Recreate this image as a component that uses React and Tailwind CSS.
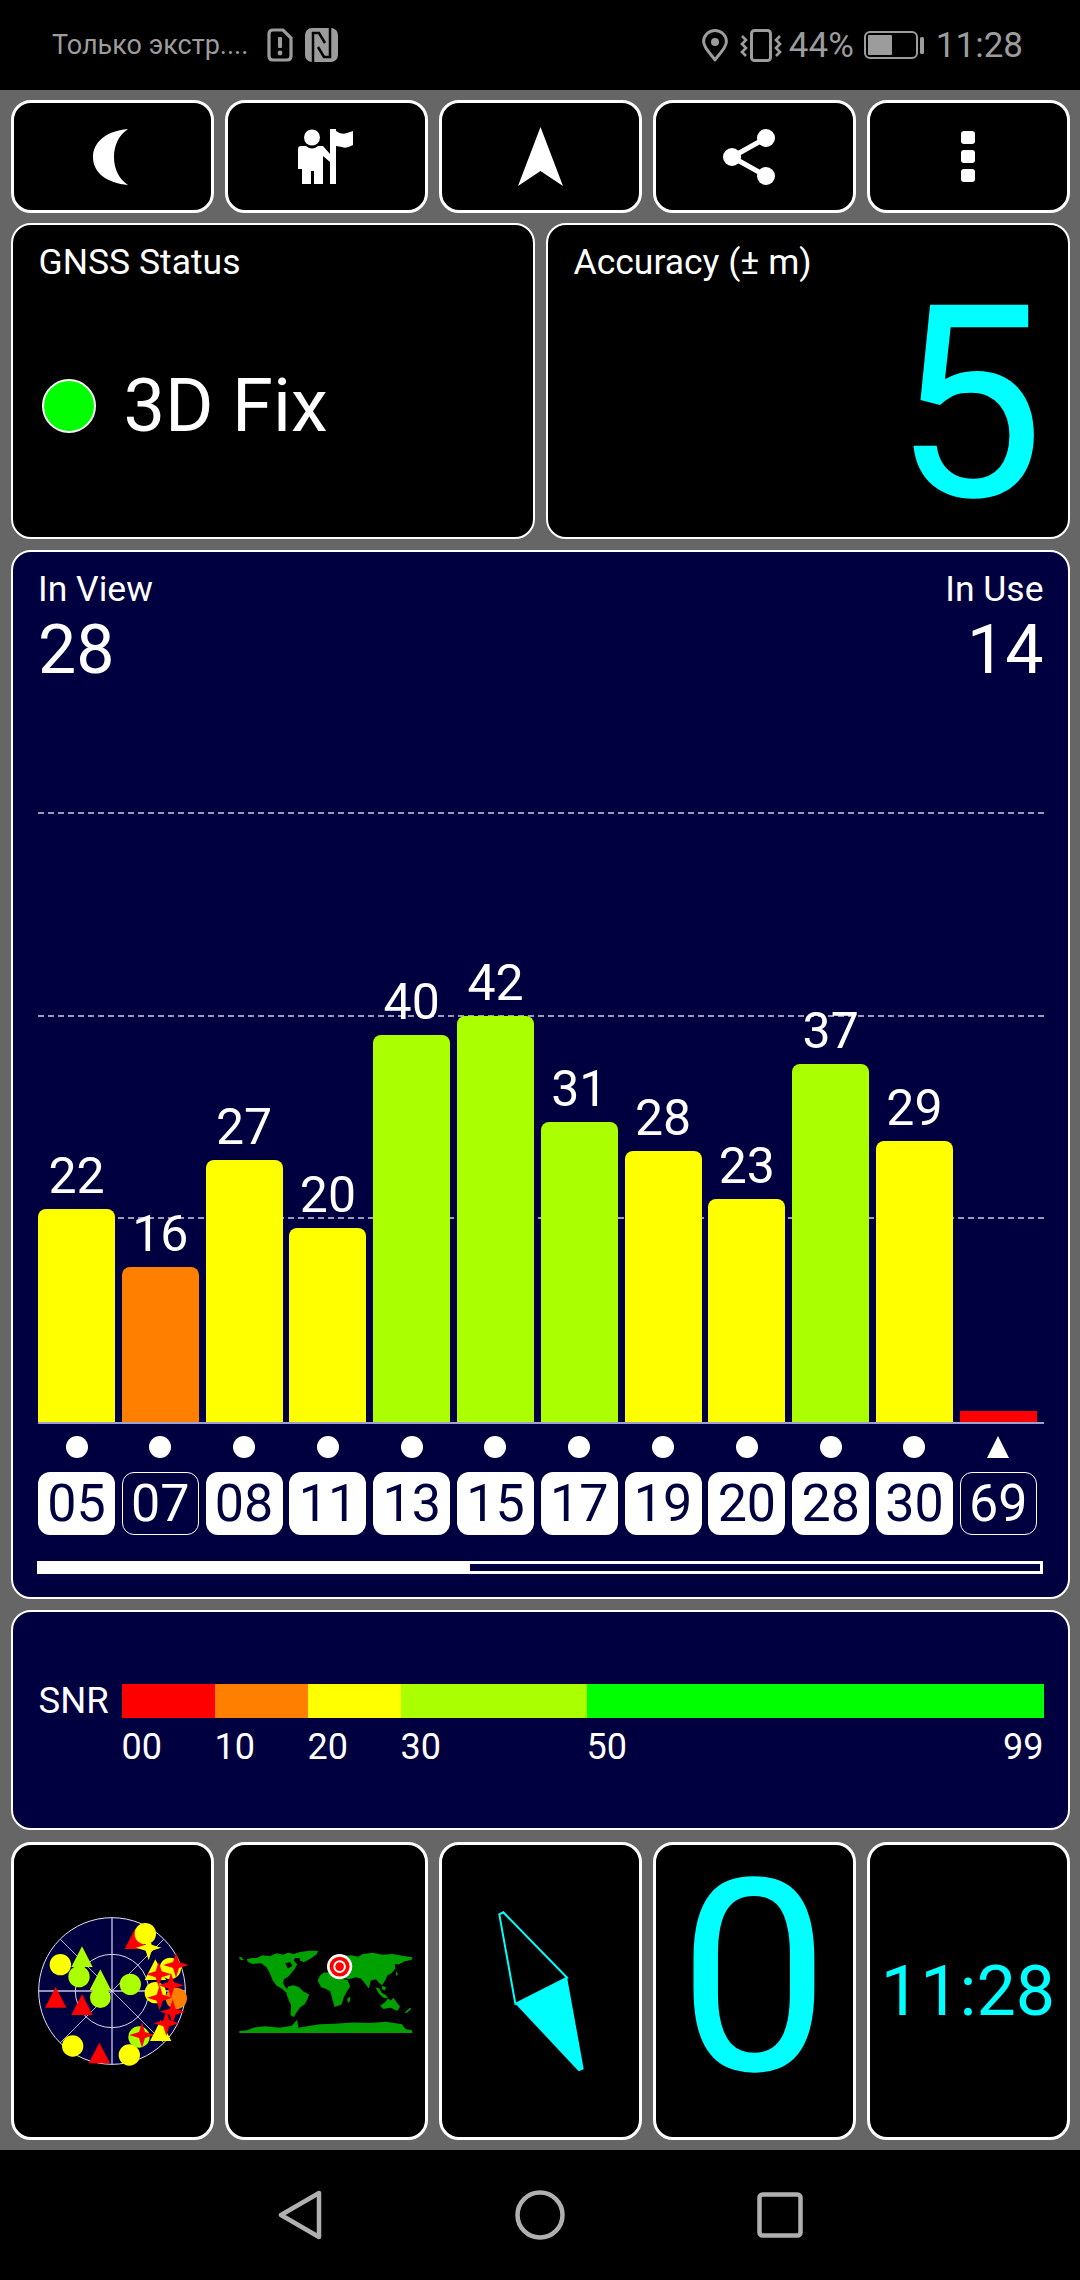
import React from "react";

const BARS = [
  { id: "05", snr: 22, h: 213, color: "bg-[#ffff00]", used: true },
  { id: "07", snr: 16, h: 155, color: "bg-[#ff8000]", used: false },
  { id: "08", snr: 27, h: 262, color: "bg-[#ffff00]", used: true },
  { id: "11", snr: 20, h: 194, color: "bg-[#ffff00]", used: true },
  { id: "13", snr: 40, h: 387, color: "bg-[#aaff00]", used: true },
  { id: "15", snr: 42, h: 406, color: "bg-[#aaff00]", used: true },
  { id: "17", snr: 31, h: 300, color: "bg-[#aaff00]", used: true },
  { id: "19", snr: 28, h: 271, color: "bg-[#ffff00]", used: true },
  { id: "20", snr: 23, h: 223, color: "bg-[#ffff00]", used: true },
  { id: "28", snr: 37, h: 358, color: "bg-[#aaff00]", used: true },
  { id: "30", snr: 29, h: 281, color: "bg-[#ffff00]", used: true },
  { id: "69", snr: null, h: 11, color: "bg-[#ff0000]", used: false, square: true },
];

// panels pass their own bg and border width
const Card = ({ className = "", children }) => (
  <div className={`border-white rounded-[20px] ${className}`}>{children}</div>
);

const Star = ({ x, y, fill, r = 38 }) => (
  <polygon
    fill={fill}
    points={`${x},${y - r} ${x + 9},${y - 9} ${x + r},${y} ${x + 9},${y + 9} ${x},${y + r} ${x - 9},${y + 9} ${x - r},${y} ${x - 9},${y - 9}`}
  />
);

const Tri = ({ x, y, fill }) => <polygon fill={fill} points={`${x},${y} ${x + 32},${y + 62} ${x - 32},${y + 62}`} />;

const SkyPlot = () => (
  <svg width="190" height="190" viewBox="-10 15 570 570">
    <circle cx="275" cy="300" r="220" fill="#000040" stroke="#e4e4f4" strokeWidth="3" />
    <circle cx="275" cy="300" r="110" fill="none" stroke="#d8d8ec" strokeWidth="3" />
    <path d="M275 80V520M55 300H495" stroke="#c4c4e4" strokeWidth="4" />
    <path d="M120 145L430 455M120 455L430 145" stroke="#d8d8ec" strokeWidth="2.5" />
    <circle cx="120" cy="221" r="32" fill="#ffff00" />
    <circle cx="157" cy="465" r="32" fill="#ffff00" />
    <Tri x={237} y={455} fill="#ff0000" />
    <circle cx="327" cy="492" r="32" fill="#ffff00" />
    <Tri x={106} y={288} fill="#ff0000" />
    <Tri x={185} y={310} fill="#ff0000" />
    <Tri x={185} y={166} fill="#aaff00" />
    <circle cx="176" cy="257" r="32" fill="#aaff00" />
    <Tri x={240} y={235} fill="#aaff00" />
    <circle cx="240" cy="320" r="31" fill="#aaff00" />
    <circle cx="330" cy="280" r="32" fill="#aaff00" />
    <Tri x={345} y={112} fill="#ff0000" />
    <circle cx="375" cy="128" r="32" fill="#ffff00" />
    <Star x={385} y={170} fill="#ffff00" r={38} />
    <circle cx="356" cy="438" r="32" fill="#aaff00" />
    <Star x={365} y={432} fill="#ff0000" />
    <circle cx="450" cy="232" r="32" fill="#ffff00" />
    <Tri x={405} y={205} fill="#ffff00" />
    <circle cx="405" cy="305" r="32" fill="#ffff00" />
    <circle cx="468" cy="322" r="32" fill="#ff8000" />
    <Tri x={421} y={388} fill="#ffff00" />
    <Star x={467} y={222} fill="#ff0000" />
    <Star x={415} y={250} fill="#ff0000" />
    <Star x={452} y={283} fill="#ff0000" />
    <Star x={418} y={320} fill="#ff0000" />
    <Star x={457} y={362} fill="#ff0000" />
    <Star x={438} y={397} fill="#ff0000" />
  </svg>
);

const WorldMap = () => (
  <svg width="174" height="83" viewBox="58 60 522 250">
    <g fill="#00a000">
      <path d="M58 80L64 82L72 90L64 91L58 86ZM80 88L96 84L110 84L128 76L150 79L170 70L190 74L205 68L222 72L240 66L270 62L295 62L292 72L272 86L252 97L240 92L240 84L226 84L222 92L232 104L224 118L214 130L206 140L192 148L190 160L196 172L212 186L206 192L196 186L186 176L170 168L158 150L150 130L140 112L124 100L98 102L84 96Z" />
      <path d="M204 170L222 166L238 172L250 184L268 194L264 206L256 222L240 234L230 248L222 262L212 256L214 228L206 208L200 194Z" />
      <path d="M294 152L300 138L312 128L330 128L350 136L362 146L384 150L392 170L382 184L372 204L366 224L345 232L338 208L332 184L316 176L304 172Z" />
      <path d="M324 124L328 104L342 84L372 78L396 76L416 80L430 72L460 68L490 74L520 72L552 78L580 82L576 90L556 94L538 104L526 102L528 116L516 130L504 136L498 150L488 166L478 158L470 148L454 152L448 176L436 160L424 146L408 142L388 148L362 140L338 130Z" />
      <path d="M468 172L480 176L486 188L500 196L506 206L492 204L478 192ZM486 168L500 172L496 182L488 178Z" />
      <path d="M482 228L496 218L506 206L514 212L522 204L532 218L542 230L534 244L514 234L492 238Z" />
      <path d="M383 206L392 200L391 214L385 220ZM556 248L572 234L576 238L562 250ZM530 124L536 132L530 138Z" />
      <path d="M58 304L82 302L100 294L136 290L180 294L216 288L232 270L236 294L262 290L300 284L345 282L400 278L450 280L500 276L548 284L558 298L578 302L580 312L58 312Z" />
    </g>
    <path d="M196 100L212 96L218 108L204 116Z" fill="#000" />
    <circle cx="360" cy="110" r="38" fill="#ffffff" />
    <circle cx="360" cy="110" r="30" fill="#ff0000" />
    <circle cx="360" cy="110" r="19" fill="#ffffff" />
    <circle cx="360" cy="110" r="13" fill="#ff0000" />
  </svg>
);

const Compass = () => (
  <svg className="w-full h-full" viewBox="441 1845 196 291">
    <path d="M514 2003L498 1914L502 1912L565.5 1977Z" fill="none" stroke="#00ffff" strokeWidth="2" />
    <path d="M514 2003L565.5 1977L582 2068L577 2070Z" fill="#00ffff" />
  </svg>
);

const Moon = () => (
  <svg width="35" height="56" viewBox="0 0 35 56" className="mr-[3px]">
    <path fill="#fff" d="M35 0C12 2 0 14 0 28C0 44 14 54 35 56C26 50 21 40 21 28C21 16 26 6 35 0Z" />
  </svg>
);

const FlagPerson = () => (
  <svg width="56" height="56" viewBox="0 0 56 56">
    <circle cx="14" cy="8.5" r="8" fill="#fff" />
    <path fill="#fff" d="M0 40V20Q0 17 3 17H8Q14 22 20 17H25L32 25V33L25 27V55H16V42H13V55H4V40Z" />
    <path fill="#fff" d="M32 0H38V2Q43 6 49 4L55 2V16Q48 20 44 18L38 17V55H32Z" />
  </svg>
);

const NavArrow = () => (
  <svg width="45" height="59" viewBox="0 0 45 59">
    <path fill="#fff" d="M22.5 0L45 59L22.5 44L0 59Z" />
  </svg>
);

const Share = () => (
  <svg width="62" height="56" viewBox="0 0 62 56">
    <path d="M43 9L9 28L43 47" fill="none" stroke="#fff" strokeWidth="5" />
    <circle cx="43" cy="9" r="9" fill="#fff" />
    <circle cx="9" cy="28" r="9" fill="#fff" />
    <circle cx="43" cy="47" r="9" fill="#fff" />
  </svg>
);

const MoreDots = () => (
  <div className="flex flex-col gap-[6px]">
    <div className="w-[14px] h-[13px] rounded-[3px] bg-white" />
    <div className="w-[14px] h-[13px] rounded-[3px] bg-white" />
    <div className="w-[14px] h-[13px] rounded-[3px] bg-white" />
  </div>
);

const StatusBar = () => (
  <div className="h-[90px] shrink-0 flex items-center justify-between pl-[52px] pr-[57px] text-[#9c9c9c]">
    <div className="flex items-center">
      <span className="text-[27px] leading-none w-[215px] whitespace-nowrap">Только экстр....</span>
      <svg width="26" height="34" viewBox="0 0 26 34" className="mr-[12px]">
        <path d="M2 6Q2 2 6 2H16L24 10V28Q24 32 20 32H6Q2 32 2 28Z" fill="none" stroke="#9c9c9c" strokeWidth="3.2" />
        <rect x="11" y="9" width="4" height="11" rx="1" fill="#9c9c9c" />
        <circle cx="13" cy="25" r="2.4" fill="#9c9c9c" />
      </svg>
      <svg width="33" height="34" viewBox="0 0 33 34">
        <rect x="0" y="0" width="33" height="34" rx="7" fill="#9c9c9c" />
        <path d="M8 34V5H14L20 15M25 0V29H19L13 19" fill="none" stroke="#000" strokeWidth="2.5" />
      </svg>
    </div>
    <div className="flex items-center">
      <svg width="26" height="33" viewBox="0 0 26 33" className="mr-[12px]">
        <path d="M13 31C9 25 1.6 19 1.6 12.5A11.4 11 0 0 1 24.4 12.5C24.4 19 17 25 13 31Z" fill="none" stroke="#9c9c9c" strokeWidth="3" strokeLinejoin="round" />
        <circle cx="13" cy="13" r="4" fill="#9c9c9c" />
      </svg>
      <svg width="42" height="33" viewBox="0 0 42 33" className="mr-[7px]">
        <rect x="11.5" y="1.5" width="19" height="30" rx="3" fill="none" stroke="#9c9c9c" strokeWidth="3" />
        <path d="M2 7L6 11L2 15L6 19L2 23L6 27M40 7L36 11L40 15L36 19L40 23L36 27" fill="none" stroke="#9c9c9c" strokeWidth="2.6" />
      </svg>
      <span className="text-[35px] leading-none w-[75px]">44%</span>
      <svg width="60" height="28" viewBox="0 0 60 28" className="mr-[12px]">
        <rect x="1" y="1" width="52" height="26" rx="5" fill="none" stroke="#9c9c9c" strokeWidth="2" />
        <rect x="4" y="4" width="24" height="20" rx="1" fill="#9c9c9c" />
        <rect x="56" y="6" width="4" height="17" rx="1.5" fill="#9c9c9c" />
      </svg>
      <span className="text-[35px] leading-none">11:28</span>
    </div>
  </div>
);

const NavBar = () => (
  <div className="flex-1 flex items-center relative">
    <svg width="44" height="50" viewBox="0 0 44 50" className="ml-[278px]">
      <path d="M41 3V47L3 25Z" fill="none" stroke="#b0b0b0" strokeWidth="4.5" strokeLinejoin="round" />
    </svg>
    <svg width="50" height="50" viewBox="0 0 50 50" className="ml-[193px]">
      <circle cx="25" cy="25" r="22.5" fill="none" stroke="#b0b0b0" strokeWidth="4.5" />
    </svg>
    <svg width="46" height="46" viewBox="0 0 46 46" className="ml-[192px]">
      <rect x="2.5" y="2.5" width="41" height="41" rx="3" fill="none" stroke="#b0b0b0" strokeWidth="4.5" />
    </svg>
  </div>
);

const SatChart = () => (
  <Card className="h-[1049px] border-2 bg-[#000040] flex flex-col pl-[25.5px] pr-[24px]">
    <div className="flex justify-between text-white pt-[15px] h-[135px]">
      <div>
        <div className="text-[35.5px] leading-[44px]">In View</div>
        <div className="text-[68px] leading-[78px]">28</div>
      </div>
      <div className="text-right">
        <div className="text-[35.5px] leading-[44px]">In Use</div>
        <div className="text-[68px] leading-[78px]">14</div>
      </div>
    </div>
    <div className="relative h-[737px] flex items-end gap-[6.8px] border-b-2 border-[#a0a0d0]">
      <div className="absolute inset-x-0 bottom-[608px] border-t-2 border-dashed border-[#9a9ab8]" />
      <div className="absolute inset-x-0 bottom-[405px] border-t-2 border-dashed border-[#9a9ab8]" />
      <div className="absolute inset-x-0 bottom-[203px] border-t-2 border-dashed border-[#9a9ab8]" />
      {BARS.map((b) => (
        <div key={b.id} className="relative w-[77px] flex flex-col items-center">
          {b.snr !== null && <span className="text-[50px] leading-[66px] text-white">{b.snr}</span>}
          <div
            className={`w-full ${b.color} ${b.square ? "" : "rounded-t-[8px]"}`}
            style={{ height: b.h }}
          />
        </div>
      ))}
    </div>
    <div className="flex gap-[6.8px] mt-[12px]">
      {BARS.map((b) => (
        <div key={b.id} className="w-[77px] flex justify-center h-[22px]">
          {b.id === "69" ? (
            <div className="w-0 h-0 border-l-[11px] border-r-[11px] border-b-[22px] border-l-transparent border-r-transparent border-b-white" />
          ) : (
            <div className="w-[22px] h-[22px] rounded-full bg-white" />
          )}
        </div>
      ))}
    </div>
    <div className="flex gap-[6.8px] mt-[14px]">
      {BARS.map((b) => (
        <div
          key={b.id}
          className={`w-[77px] h-[63px] rounded-[12px] flex items-center justify-center text-[52px] leading-none ${
            b.used ? "bg-white text-[#000040]" : "border border-white text-white"
          }`}
        >
          {b.id}
        </div>
      ))}
    </div>
    <div className="mt-[26px] h-[13px] w-[1006px] -ml-[1px] border-[3px] border-white">
      <div className="h-full w-[430px] bg-white" />
    </div>
  </Card>
);

const SnrLegend = () => (
  <Card className="h-[220px] border-2 bg-[#000040] flex flex-col pl-[26px] pr-[24px] pt-[71px]">
    <div className="flex items-center">
      <span className="w-[83px] text-[36.5px] leading-none text-white">SNR</span>
      <div className="flex h-[34px] w-[922px]">
        <div className="w-[93px] bg-[#ff0000]" />
        <div className="w-[93px] bg-[#ff8000]" />
        <div className="w-[93px] bg-[#ffff00]" />
        <div className="w-[186px] bg-[#aaff00]" />
        <div className="flex-1 bg-[#00ff00]" />
      </div>
    </div>
    <div className="flex ml-[83px] w-[922px] mt-[5px] text-[36px] leading-[44px] text-white">
      <span className="w-[93px]">00</span>
      <span className="w-[93px]">10</span>
      <span className="w-[93px]">20</span>
      <span className="w-[186px]">30</span>
      <span className="flex-1">50</span>
      <span>99</span>
    </div>
  </Card>
);

export default function App() {
  return (
    <div className="w-[1080px] h-[2280px] bg-black flex flex-col font-['Roboto',sans-serif]">
      <StatusBar />
      <div className="h-[2060px] shrink-0 bg-[#666666] px-[10.5px] pt-[10px] flex flex-col">
        <div className="grid grid-cols-5 gap-x-[11px] h-[113px]">
          <Card className="border-[3px] bg-black flex items-center justify-center"><Moon /></Card>
          <Card className="border-[3px] bg-black flex items-center justify-center"><FlagPerson /></Card>
          <Card className="border-[3px] bg-black flex items-center justify-center"><NavArrow /></Card>
          <Card className="border-[3px] bg-black flex items-center justify-center"><Share /></Card>
          <Card className="border-[3px] bg-black flex items-center justify-center"><MoreDots /></Card>
        </div>
        <div className="grid grid-cols-2 gap-x-[11px] h-[316px] mt-[10px]">
          <Card className="border-2 bg-black flex flex-col pl-[26px] pr-[25px] pt-[15px]">
            <div className="text-[35.5px] leading-[44px] text-white">GNSS Status</div>
            <div className="flex items-center mt-[85px]">
              <div className="w-[54px] h-[54px] rounded-full bg-[#00ff00] border-2 border-white ml-[3px]" />
              <span className="ml-[28px] text-[74px] leading-none text-white">3D Fix</span>
            </div>
          </Card>
          <Card className="border-2 bg-black flex flex-col pl-[26px] pr-[26px] pt-[15px]">
            <div className="text-[35.5px] leading-[44px] text-white">Accuracy (± m)</div>
            <div className="flex justify-end text-[269px] leading-[240px] text-[#00ffff] -mr-[3px]">5</div>
          </Card>
        </div>
        <div className="mt-[11px]"><SatChart /></div>
        <div className="mt-[11px]"><SnrLegend /></div>
        <div className="grid grid-cols-5 gap-x-[11px] h-[297px] mt-[12px]">
          <Card className="border-[3px] bg-black flex items-center justify-center"><SkyPlot /></Card>
          <Card className="border-[3px] bg-black flex items-center justify-center"><WorldMap /></Card>
          <Card className="border-[3px] bg-black"><Compass /></Card>
          <Card className="border-[3px] bg-black flex justify-center pt-[13px] text-[269px] leading-[240px] text-[#00ffff]">0</Card>
          <Card className="border-[3px] bg-black flex items-center justify-center text-[70px] leading-none text-[#00ffff]">11:28</Card>
        </div>
      </div>
      <NavBar />
    </div>
  );
}
